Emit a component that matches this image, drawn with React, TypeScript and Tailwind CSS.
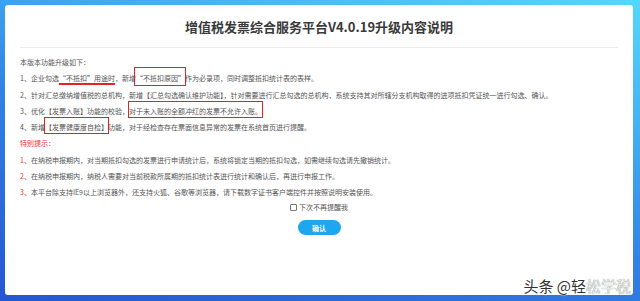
import React from "react";

const cjk = { fontFamily: '"Noto Sans CJK SC", "Noto Sans", sans-serif' };

function Box({ children, className }: { children: React.ReactNode; className: string }) {
  return (
    <span className="relative">
      {children}
      <span className={`pointer-events-none absolute border-[1.5px] border-[#e3231f] ${className}`} />
    </span>
  );
}

const notes = [
  "在纳税申报期内，对当期抵扣勾选的发票进行申请统计后，系统将锁定当期的抵扣勾选，如需继续勾选请先撤销统计。",
  "在纳税申报期内，纳税人需要对当前税款所属期的抵扣统计表进行统计和确认后，再进行申报工作。",
  "本平台除支持IE9以上浏览器外，还支持火狐、谷歌等浏览器，请下载数字证书客户端控件并按照说明安装使用。",
];

export default function App() {
  return (
    <div
      style={cjk}
      className="relative h-[301px] w-[640px] overflow-hidden bg-[linear-gradient(15deg,#2656d2_0%,#3282e4_45%,#45b4f2_75%,#54d8fb_100%)] p-[5px]"
    >
      <div className="flex h-[290px] w-[628px] flex-col rounded-[3px] bg-white">
        {/* Header */}
        <div className="mx-[15px] flex h-[43px] items-center justify-center border-b border-[#ececec] pt-[1px]">
          <h1 className="text-[13px] font-bold text-[#3a3a3a]">增值税发票综合服务平台V4.0.19升级内容说明</h1>
        </div>

        {/* Content */}
        <div className="px-[15px] pt-[6px] text-[7px] leading-[16.25px] text-[#555]">
          <p>本版本功能升级如下：</p>
          <p>
            1、企业勾选
            <span className="underline decoration-[#e3231f] decoration-[1.5px] underline-offset-[2px]">“不抵扣”用途时</span>
            ，新增
            <Box className="-left-[2px] -right-[1px] -top-[6px] -bottom-[3px]">“不抵扣原因”</Box>
            作为必录项，同时调整抵扣统计表的表样。
          </p>
          <p>
            2、针对汇总缴纳增值税的总机构，新增【汇总勾选确认维护功能】，针对需要进行汇总勾选的总机构，系统支持其对所辖分支机构取得的进项抵扣凭证统一进行勾选、确认。
          </p>
          <p>
            3、优化【发票入账】功能的校验，
            <Box className="-left-[1px] -right-[1px] -top-[5px] -bottom-[2px]">对于未入账的全额冲红的发票不允许入账。</Box>
          </p>
          <p>
            4、新增
            <Box className="-left-[1px] -right-[1px] -top-[5px] -bottom-[2px]">【发票健康度自检】</Box>
            功能，对于经检查存在票面信息异常的发票在系统首页进行提醒。
          </p>
          <p className="text-[#f0312c]">特别提示：</p>
          {notes.map((n, i) => (
            <p key={i}>
              <span className="text-[#f0312c]">{i + 1}、</span>
              {n}
            </p>
          ))}
        </div>

        {/* Footer */}
        <div className="flex flex-col items-center">
          <label className="flex h-[14px] items-center gap-[2px] text-[7px] text-[#555]">
            <span className="h-[7px] w-[7px] rounded-[1px] border border-[#777] bg-white" />
            下次不再提醒我
          </label>
          <button className="mt-[6px] flex h-[15px] w-[43px] items-center justify-center rounded-full bg-[#1ea6ee] text-[7px] font-bold text-white">
            确认
          </button>
        </div>
      </div>

      {/* watermark */}
      <div className="absolute bottom-[8px] right-[9px] text-[15px] leading-none text-[#333] [text-shadow:0_0_1px_#fff,0_0_2px_#fff]">
        头条 @轻<span className="text-[#e8e8e8] [text-shadow:0_0_1px_#666]">松学税</span>
      </div>
    </div>
  );
}
